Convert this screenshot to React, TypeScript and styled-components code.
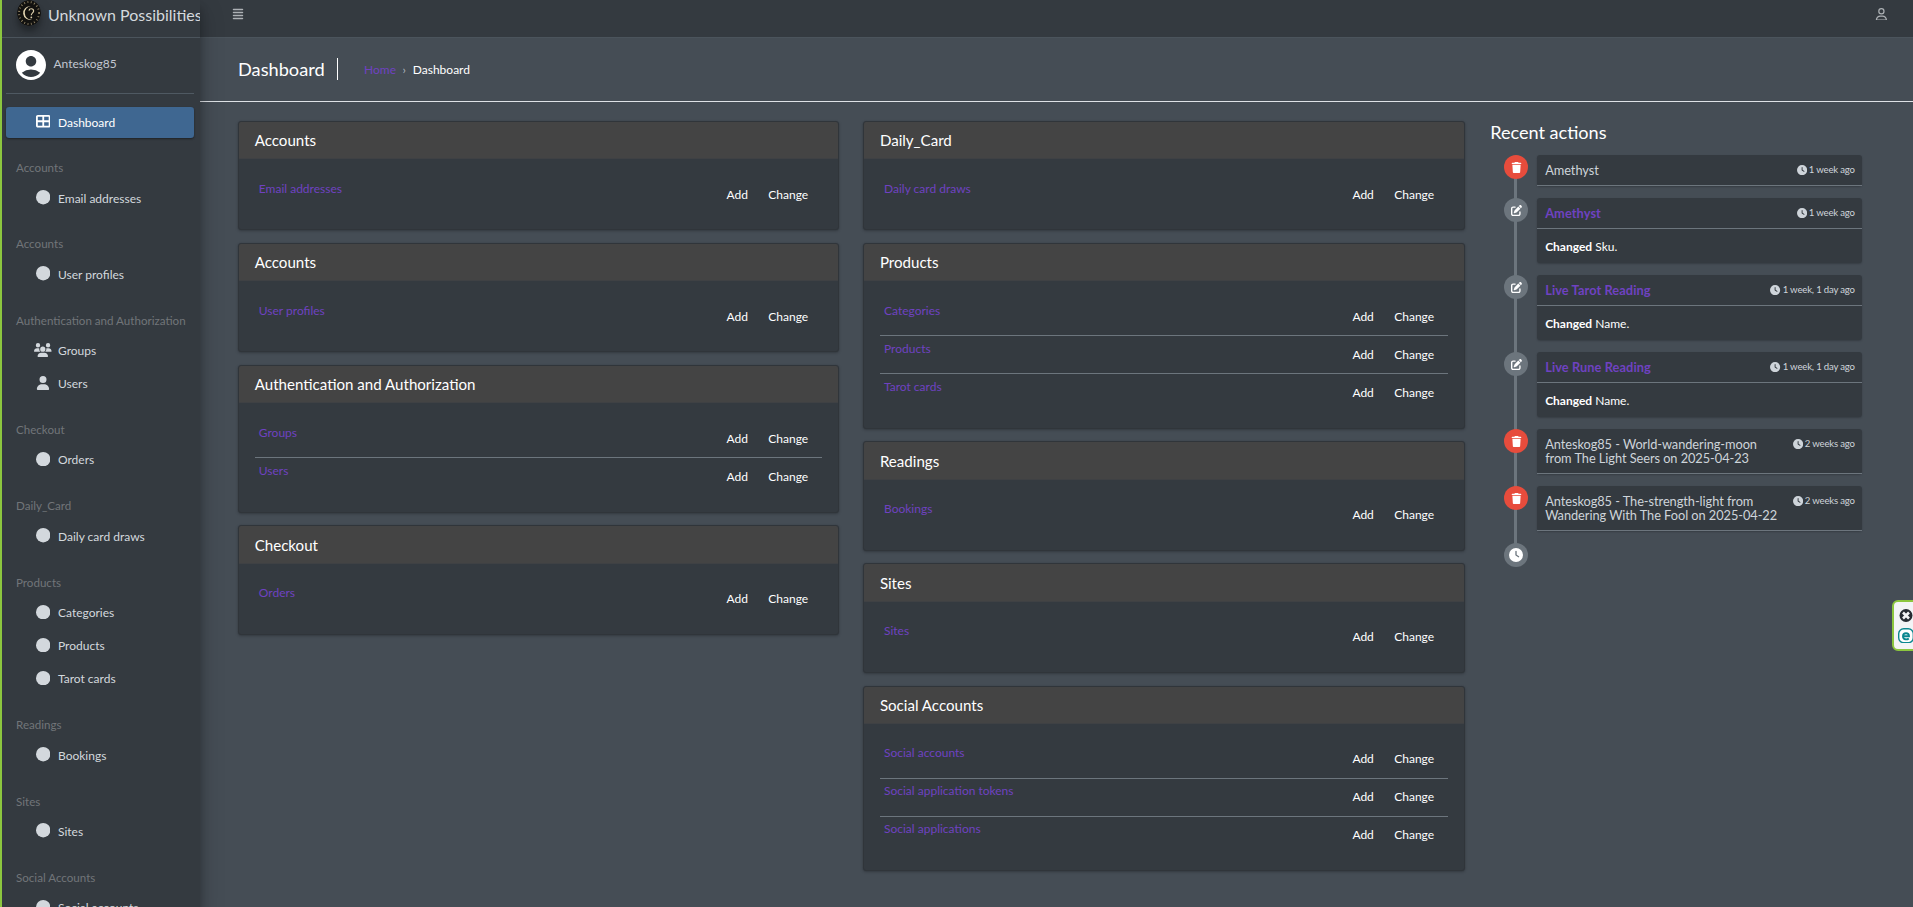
import React from "react";
import styled, { createGlobalStyle, css } from "styled-components";
import {
  FaAlignJustify,
  FaCircle,
  FaClock,
  FaPenToSquare,
  FaRegUser,
  FaTableCellsLarge,
  FaTrash,
  FaUser,
  FaUsers,
} from "react-icons/fa6";
import { MdAccountCircle } from "react-icons/md";

const GlobalStyle = createGlobalStyle`
  *, *::before, *::after { box-sizing: border-box; }
  html, body { margin: 0; height: 907px; overflow: hidden; background: #454d55; }
  body {
    font-family: Lato, "Liberation Sans", sans-serif;
    font-size: 12px;
    line-height: 19.2px;
    color: #fff;
  }
  h1, h2, h3, p, ul { margin: 0; padding: 0; font-weight: 400; }
  ul { list-style: none; }
  a { color: #6f42c1; text-decoration: none; }
  svg { display: block; flex: none; }
`;

const Page = styled.div`
  display: flex;
  position: relative;
  width: 1913px;
  height: 907px;
  overflow: hidden;
`;

const Sidebar = styled.aside`
  width: 200px;
  height: 907px;
  flex: none;
  background: #343a40;
  border-left: 2px solid #8cc63f;
  box-shadow: 0 11px 22px rgba(0, 0, 0, 0.25), 0 8px 8px rgba(0, 0, 0, 0.22);
  overflow: hidden;
  z-index: 1;
`;

const Brand = styled.div`
  display: flex;
  height: 38px;
  padding-left: 15px;
  border-bottom: 1px solid #4b545c;
  overflow: hidden;
  color: #d5d9dd;
`;

const BrandMark = styled.svg`
  width: 24px;
  height: 26px;
  border-radius: 50%;
  box-shadow: 0 8px 16px rgba(0, 0, 0, 0.19), 0 5px 5px rgba(0, 0, 0, 0.23);
`;

const BrandName = styled.span`
  margin: 3px 0 0 7px;
  font-size: 16px;
  line-height: 24px;
  white-space: nowrap;
`;

const UserPanel = styled.div`
  display: flex;
  height: 56px;
  margin: 0 6px 13px 4px;
  padding: 9px 0 0 7px;
  border-bottom: 1px solid #4f5962;
  color: #c2c7d0;
  svg { color: #fff; }
`;

const UserName = styled.span`
  margin: 7px 0 0 4.5px;
`;

const Nav = styled.nav`
  padding: 0 6px 0 4px;
`;

const NavHeader = styled.div`
  height: 43px;
  padding: 18px 0 0 10px;
  font-size: 11.6px;
  color: #717579;
  white-space: nowrap;
`;

const NavLink = styled.div<{ $active?: boolean }>`
  display: flex;
  align-items: flex-start;
  height: 31px;
  margin-bottom: 2.24px;
  padding: 5.3px 0 0 27px;
  border-radius: 3.2px;
  color: #d3d8dd;
  white-space: nowrap;
  ${(p) =>
    p.$active &&
    css`
      padding-top: 5.8px;
      background: #3f6791;
      color: #fff;
      box-shadow: 0 1px 2px rgba(0, 0, 0, 0.24), 0 1px 2px rgba(0, 0, 0, 0.2);
    `}
`;

const NavIcon = styled.span`
  display: flex;
  justify-content: center;
  width: 20px;
  margin: 1.6px 5px 0 0;
`;

const Main = styled.main`
  flex: 1;
  min-width: 0;
`;

const Topbar = styled.header`
  display: flex;
  justify-content: space-between;
  height: 38px;
  padding: 7.6px 25px 0 32px;
  background: #343a40;
  border-bottom: 1px solid #4b545c;
  color: #adb1b5;
`;

const PageHeader = styled.div`
  display: flex;
  height: 64px;
  padding: 20px 0 0 38px;
  border-bottom: 1px solid #dee2e6;
`;

const PageTitle = styled.h1`
  height: 22px;
  width: 100px;
  border-right: 1px solid #fff;
  font-size: 18.2px;
  line-height: 23px;
`;

const Breadcrumb = styled.div`
  display: flex;
  gap: 6.4px;
  padding: 2.4px 0 0 26px;
`;

const Separator = styled.span`
  width: 4px;
  color: #adb5bd;
`;

const Columns = styled.div`
  display: grid;
  grid-template-columns: 600.5px 601.2px 385px;
  column-gap: 24.7px;
  padding: 19px 0 0 38.3px;
`;

const Stack = styled.div`
  display: flex;
  flex-direction: column;
  gap: 12.8px;
`;

const Card = styled.section`
  background: #343a40;
  border: 1px solid #30353a;
  border-radius: 3.2px;
  box-shadow: 0 0 1px rgba(0, 0, 0, 0.13), 0 1px 3px rgba(0, 0, 0, 0.25);
`;

const CardTitle = styled.h2`
  height: 37.2px;
  padding: 6.2px 16px 0 15.4px;
  background: #444;
  border-bottom: 1px solid #3f4144;
  border-radius: 2.4px 2.4px 0 0;
  font-size: 15.1px;
  line-height: 24px;
`;

const CardBody = styled.div`
  padding: 16px;
`;

const ModelRow = styled.div`
  display: flex;
  justify-content: space-between;
  height: 38.1px;
  padding: 3.6px 13.6px 0 3.5px;
  & + & { border-top: 1px solid #6c757d; padding-top: 2.6px; }
`;

const RowActions = styled.div`
  display: flex;
  gap: 20.4px;
  padding-top: 6px;
`;

const Recent = styled.section`
  padding: 0 12px 0 0.8px;
`;

const RecentTitle = styled.h2`
  margin-bottom: 11px;
  font-size: 18.1px;
  line-height: 23px;
`;

const Timeline = styled.ul`
  display: flex;
  flex-direction: column;
  gap: 12px;
  padding-left: 14px;
`;

const TimelineItem = styled.li<{ $last?: boolean }>`
  display: flex;
  align-items: flex-start;
  gap: 9px;
  position: relative;
  ${(p) =>
    !p.$last &&
    css`
      &::before {
        content: "";
        position: absolute;
        left: 10px;
        top: 12px;
        bottom: -14px;
        width: 3px;
        background: #6c757d;
      }
    `}
`;

const Bullet = styled.span<{ $danger?: boolean }>`
  display: flex;
  align-items: center;
  justify-content: center;
  flex: none;
  position: relative;
  width: 24px;
  height: 24px;
  border-radius: 50%;
  background: ${(p) => (p.$danger ? "#e74c3c" : "#6c757d")};
`;

const Entry = styled.article`
  flex: 1;
  background: #343a40;
  border-radius: 3.2px;
  box-shadow: 0 1px 2px rgba(0, 0, 0, 0.22);
`;

const EntryHead = styled.div`
  display: flex;
  justify-content: space-between;
  align-items: flex-start;
  padding: 8px 7.5px 8px 8px;
  border-bottom: 1px solid #6c757d;
`;

const EntryTitle = styled.h3<{ $link?: boolean }>`
  font-size: 12.8px;
  line-height: 14px;
  letter-spacing: -0.06px;
  color: #ced4da;
  white-space: pre-line;
  ${(p) =>
    p.$link &&
    css`
      color: #6f42c1;
      font-weight: 700;
      letter-spacing: 0.08px;
    `}
`;

const EntryTime = styled.span`
  display: flex;
  align-items: center;
  gap: 2px;
  font-size: 9.6px;
  line-height: 14px;
  letter-spacing: -0.18px;
  color: #ced4da;
  white-space: nowrap;
`;

const EntryBody = styled.div`
  height: 34.1px;
  padding: 7.6px 8px 0;
`;

const Dock = styled.div`
  position: absolute;
  right: -6px;
  top: 600px;
  width: 27px;
  height: 51px;
  padding: 7px 0 0 4px;
  background: #f3f4f6;
  border: 2px solid #8cc63f;
  border-radius: 6px;
  z-index: 2;
`;

const BrandLogo = () => (
  <BrandMark viewBox="0 0 24 26">
    <ellipse cx="12" cy="13" rx="12" ry="13" fill="#12110f" />
    <ellipse cx="12" cy="13" rx="10" ry="11" fill="none" stroke="#8f8265" strokeWidth="2" strokeDasharray="0.9 2.5" />
    <path d="M13.6 6.300a6.800 6.800 0 1 0 1.500 13.200a6.500 6.500 0 0 1-7.300-6.500a6.600 6.600 0 0 1 5.800-6.700z" fill="#e0d3b0" />
    <path d="M12 10.600c.3-2.500 4.500-2.500 4.600.3 0 1.900-2.300 2-2.300 4.300" fill="none" stroke="#d8cba9" strokeWidth="1.200" />
    <circle cx="14.300" cy="17.400" r=".9" fill="#d8cba9" />
  </BrandMark>
);

type NavGroup = { title: string; items: string[] };

const navGroups: NavGroup[] = [
  { title: "Accounts", items: ["Email addresses"] },
  { title: "Accounts", items: ["User profiles"] },
  { title: "Authentication and Authorization", items: ["Groups", "Users"] },
  { title: "Checkout", items: ["Orders"] },
  { title: "Daily_Card", items: ["Daily card draws"] },
  { title: "Products", items: ["Categories", "Products", "Tarot cards"] },
  { title: "Readings", items: ["Bookings"] },
  { title: "Sites", items: ["Sites"] },
  { title: "Social Accounts", items: ["Social accounts"] },
];

const leftCards = navGroups.slice(0, 4);
const rightCards: NavGroup[] = [
  ...navGroups.slice(4, 8),
  {
    title: "Social Accounts",
    items: ["Social accounts", "Social application tokens", "Social applications"],
  },
];

type Action = { title: string; time: string; change?: string };

const actions: Action[] = [
  { title: "Amethyst", time: "1 week ago" },
  { title: "Amethyst", time: "1 week ago", change: "Sku." },
  { title: "Live Tarot Reading", time: "1 week, 1 day ago", change: "Name." },
  { title: "Live Rune Reading", time: "1 week, 1 day ago", change: "Name." },
  { title: "Anteskog85 - World-wandering-moon\nfrom The Light Seers on 2025-04-23", time: "2 weeks ago" },
  { title: "Anteskog85 - The-strength-light from\nWandering With The Fool on 2025-04-22", time: "2 weeks ago" },
];

const GroupsIcon = styled(FaUsers)`
  width: 17.6px;
  height: 14px;
`;

const iconFor = (name: string) => {
  if (name === "Groups") return <GroupsIcon />;
  if (name === "Users") return <FaUser size={14} />;
  return <FaCircle size={14.4} />;
};

const ModelCard = ({ title, items }: NavGroup) => (
  <Card>
    <CardTitle>{title}</CardTitle>
    <CardBody>
      {items.map((item) => (
        <ModelRow key={item}>
          <a>{item}</a>
          <RowActions>
            <span>Add</span>
            <span>Change</span>
          </RowActions>
        </ModelRow>
      ))}
    </CardBody>
  </Card>
);

export default function App() {
  return (
    <>
      <GlobalStyle />
      <Page>
        <Sidebar>
          <Brand>
            <BrandLogo />
            <BrandName>Unknown Possibilities</BrandName>
          </Brand>
          <UserPanel>
            <MdAccountCircle size={36} />
            <UserName>Anteskog85</UserName>
          </UserPanel>
          <Nav>
            <NavLink $active>
              <NavIcon>
                <FaTableCellsLarge size={14.5} />
              </NavIcon>
              Dashboard
            </NavLink>
            {navGroups.map((group, i) => (
              <React.Fragment key={i}>
                <NavHeader>{group.title}</NavHeader>
                {group.items.map((item) => (
                  <NavLink key={item}>
                    <NavIcon>{iconFor(item)}</NavIcon>
                    {item}
                  </NavLink>
                ))}
              </React.Fragment>
            ))}
          </Nav>
        </Sidebar>
        <Main>
          <Topbar>
            <FaAlignJustify size={12} />
            <FaRegUser size={12.8} />
          </Topbar>
          <PageHeader>
            <PageTitle>Dashboard</PageTitle>
            <Breadcrumb>
              <a>Home</a>
              <Separator>›</Separator>
              <span>Dashboard</span>
            </Breadcrumb>
          </PageHeader>
          <Columns>
            <Stack>
              {leftCards.map((card, i) => (
                <ModelCard key={i} {...card} />
              ))}
            </Stack>
            <Stack>
              {rightCards.map((card, i) => (
                <ModelCard key={i} {...card} />
              ))}
            </Stack>
            <Recent>
              <RecentTitle>Recent actions</RecentTitle>
              <Timeline>
                {actions.map((action, i) => (
                  <TimelineItem key={i}>
                    <Bullet $danger={!action.change}>
                      {action.change ? <FaPenToSquare size={11} /> : <FaTrash size={11} />}
                    </Bullet>
                    <Entry>
                      <EntryHead>
                        <EntryTitle $link={!!action.change}>{action.title}</EntryTitle>
                        <EntryTime>
                          <FaClock size={10.2} />
                          {action.time}
                        </EntryTime>
                      </EntryHead>
                      {action.change && (
                        <EntryBody>
                          <b>Changed</b> {action.change}
                        </EntryBody>
                      )}
                    </Entry>
                  </TimelineItem>
                ))}
                <TimelineItem $last>
                  <Bullet>
                    <FaClock size={14} />
                  </Bullet>
                </TimelineItem>
              </Timeline>
            </Recent>
          </Columns>
        </Main>
        <Dock>
          <svg width="16" height="34" viewBox="0 0 16 34">
            <circle cx="8" cy="6.500" r="6.500" fill="#272c33" />
            <path d="M5 3.500l6 6M11 3.500l-6 6" stroke="#f3f4f6" strokeWidth="2.600" />
            <rect x=".7" y="19.700" width="14.600" height="14" rx="5" fill="#fff" stroke="#0b8790" strokeWidth="1.400" />
            <path d="M5 27.200h6c0-4-6-4-6 0 0 3.600 3.800 3.800 5.800 2.200" fill="none" stroke="#0b8790" strokeWidth="1.900" />
          </svg>
        </Dock>
      </Page>
    </>
  );
}
